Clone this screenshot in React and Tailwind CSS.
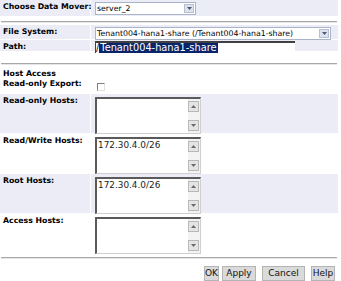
import React from 'react';

const font = { fontFamily: '"DejaVu Sans", Verdana, sans-serif' };

function Arrow({ up }) {
  return (
    <div className="w-[11px] h-[11px] bg-[#e4e4e4] border border-[#b8b8b8] flex items-center justify-center">
      <svg width="5" height="3" viewBox="0 0 5 3">
        <path d={up ? 'M0 3 L2.5 0 L5 3 Z' : 'M0 0 L2.5 3 L5 0 Z'} fill="#6a6a6a" />
      </svg>
    </div>
  );
}

function Select({ value, className }) {
  return (
    <div className={`h-[13px] bg-white border border-[#a9b4c8] flex items-center ${className}`}>
      <span className="flex-1 pl-[1px] text-[7.8px] leading-[11px] text-black whitespace-nowrap overflow-hidden">{value}</span>
      <div className="w-[10px] h-[9px] mr-[1px] bg-[#dde3ee] border border-[#b6c0d2] flex items-center justify-center">
        <svg width="5" height="3" viewBox="0 0 5 3"><path d="M0 0 L2.5 3 L5 0 Z" fill="#4e5a70" /></svg>
      </div>
    </div>
  );
}

function TextArea({ value }) {
  return (
    <div className="w-[106px] h-[37px] bg-white border-t-2 border-l-2 border-[#5a5a5a] border-r border-b border-r-[#cfcfcf] border-b-[#cfcfcf] flex">
      <div className="flex-1 pl-[1px] pt-[2px] text-[8.9px] leading-none text-[#222] whitespace-nowrap">{value}</div>
      <div className="w-[12px] flex flex-col justify-between bg-[#f3f3f3] py-[2px]">
        <Arrow up />
        <Arrow />
      </div>
    </div>
  );
}

function Row({ label, shaded, children, h }) {
  return (
    <div className={`flex gap-[1px] ${h}`}>
      <div className={`w-[90px] pl-[3px] pt-[3px] text-[7.8px] font-bold leading-none text-black whitespace-nowrap ${shaded ? 'bg-[#ececf6]' : 'bg-white'}`}>{label}</div>
      <div className={`flex-1 pl-[4px] pt-[3px] ${shaded ? 'bg-[#ececf6]' : 'bg-white'}`}>{children}</div>
    </div>
  );
}

function Rule() {
  return <div className="mx-[1px] h-[2px] border-t border-[#a8a8a8] bg-[#e6e6e6]" />;
}

function Btn({ children, className }) {
  return (
    <div className={`h-[15px] flex items-center justify-center bg-[#dadada] border border-[#b4b4b4] text-[9px] leading-none text-[#111] ${className}`}>{children}</div>
  );
}

export default function App() {
  return (
    <div className="w-[341px] h-[281px] bg-white overflow-hidden pr-[3px]" style={font}>
      <Row label="Choose Data Mover:" shaded h="h-[16px]">
        <div className="-mt-[1px]"><Select value="server_2" className="w-[101px]" /></div>
      </Row>
      <div className="h-[5px]" />
      <Rule />
      <div className="h-[2px]" />
      <div className="flex flex-col gap-[1px]">
        <Row label="File System:" shaded h="h-[14px]">
          <div className="-mt-[1px]"><Select value="Tenant004-hana1-share (/Tenant004-hana1-share)" className="w-[236px]" /></div>
        </Row>
        <Row label="Path:" shaded h="h-[11px]">
          <div className="-mt-[2px] w-[200px] h-[12px] bg-white border-t-2 border-l border-[#404040] flex items-center text-[9.8px] leading-none">
            <span className="text-black">/</span>
            <span className="bg-[#0a246a] text-white px-[1px]">Tenant004-hana1-share</span>
          </div>
        </Row>
      </div>
      <div className="h-[12px]" />
      <Rule />
      <div className="h-[12px] pl-[3px] pt-[5px] text-[7.8px] font-bold leading-none text-black">Host Access</div>
      <Row label="Read-only Export:" h="h-[16px]">
        <div className="mt-[3px] ml-[2px] w-[8px] h-[8px] border-t border-l border-[#808080] border-r border-b border-r-[#e0e0e0] border-b-[#e0e0e0] bg-white" />
      </Row>
      <div className="flex flex-col gap-[1px] pt-[1px]">
        <Row label="Read-only Hosts:" shaded h="h-[39px]"><TextArea value="" /></Row>
        <Row label="Read/Write Hosts:" h="h-[39px]"><TextArea value="172.30.4.0/26" /></Row>
        <Row label="Root Hosts:" shaded h="h-[39px]"><TextArea value="172.30.4.0/26" /></Row>
        <Row label="Access Hosts:" h="h-[39px]"><TextArea value="" /></Row>
      </div>
      <div className="h-[4px]" />
      <Rule />
      <div className="flex justify-end pt-[7px] pr-[3px]">
        <Btn className="w-[15px] border-[#404040]">OK</Btn>
        <Btn className="w-[34px] ml-[3px]">Apply</Btn>
        <Btn className="w-[43px] ml-[6px]">Cancel</Btn>
        <Btn className="w-[24px] ml-[6px]">Help</Btn>
      </div>
    </div>
  );
}
